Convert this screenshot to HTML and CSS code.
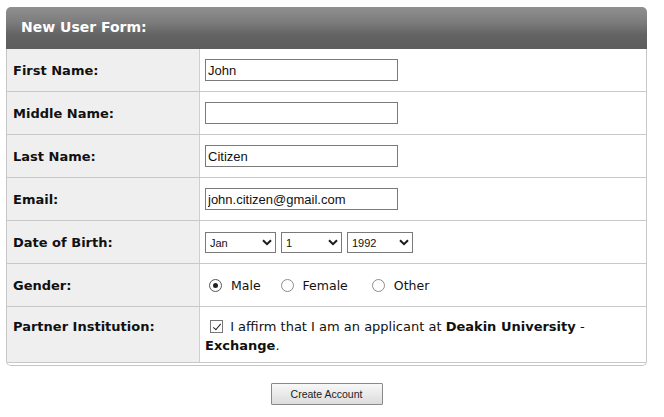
FILE: index.html
```html
<!DOCTYPE html>
<html lang="en">
<head>
<meta charset="utf-8">
<title>New User Form</title>
<link rel="stylesheet" href="styles.css">
</head>
<body>
<form class="panel">
  <div class="panel-head">New User Form:</div>
  <div class="panel-body">
    <div class="row">
      <label class="cell-label" for="fn">First Name:</label>
      <div class="cell-value"><input class="text" id="fn" type="text" value="John"></div>
    </div>
    <div class="row">
      <label class="cell-label" for="mn">Middle Name:</label>
      <div class="cell-value"><input class="text" id="mn" type="text" value=""></div>
    </div>
    <div class="row">
      <label class="cell-label" for="ln">Last Name:</label>
      <div class="cell-value"><input class="text" id="ln" type="text" value="Citizen"></div>
    </div>
    <div class="row">
      <label class="cell-label" for="em">Email:</label>
      <div class="cell-value"><input class="text" id="em" type="text" value="john.citizen@gmail.com"></div>
    </div>
    <div class="row">
      <div class="cell-label">Date of Birth:</div>
      <div class="cell-value selects">
        <span class="select sel-month"><select><option>Jan</option></select><svg class="chev" width="10" height="7" viewBox="0 0 10 7"><path d="M1 1.2 L5 5.2 L9 1.2" fill="none" stroke="#1a1a1a" stroke-width="2"/></svg></span>
        <span class="select sel-day"><select><option>1</option></select><svg class="chev" width="10" height="7" viewBox="0 0 10 7"><path d="M1 1.2 L5 5.2 L9 1.2" fill="none" stroke="#1a1a1a" stroke-width="2"/></svg></span>
        <span class="select sel-year"><select><option>1992</option></select><svg class="chev" width="10" height="7" viewBox="0 0 10 7"><path d="M1 1.2 L5 5.2 L9 1.2" fill="none" stroke="#1a1a1a" stroke-width="2"/></svg></span>
      </div>
    </div>
    <div class="row">
      <div class="cell-label">Gender:</div>
      <div class="cell-value radios">
        <label class="opt"><input type="radio" name="g" checked><span>Male</span></label>
        <label class="opt opt-wide"><input type="radio" name="g"><span>Female</span></label>
        <label class="opt"><input type="radio" name="g"><span>Other</span></label>
      </div>
    </div>
    <div class="row row-tall">
      <div class="cell-label">Partner Institution:</div>
      <div class="cell-value affirm"><label><input type="checkbox" checked> I affirm that I am an applicant at <b>Deakin University</b> - <b>Exchange</b>.</label></div>
    </div>
  </div>
  <div class="actions"><button type="button" class="btn">Create Account</button></div>
</form>
</body>
</html>
```
FILE: styles.css
```css
html, body {
  margin: 0;
  padding: 0;
  background: #fff;
}
body {
  font-family: "DejaVu Sans", Verdana, sans-serif;
  color: #111;
}
.panel {
  width: 641px;
  margin: 7px 0 0 6px;
}
.panel-head {
  height: 42px;
  line-height: 40px;
  padding-left: 15px;
  border-radius: 5px 5px 0 0;
  background: linear-gradient(to bottom, #909090 0%, #7d7d7d 35%, #646464 65%, #5c5c5c 100%);
  color: #fff;
  font-weight: bold;
  font-size: 14px;
}
.panel-body {
  border: 1px solid #c6c6c6;
  border-top: none;
  border-radius: 0 0 5px 5px;
  padding-bottom: 2px;
}
.row {
  display: grid;
  grid-template-columns: 193px 1fr;
  height: 42px;
  border-bottom: 1px solid #c8c8c8;
}
.cell-label {
  display: flex;
  align-items: center;
  padding-left: 6px;
  background: #efefef;
  border-right: 1px solid #cfcfcf;
  font-weight: bold;
  font-size: 13px;
  color: #111;
}
.cell-value {
  display: flex;
  align-items: center;
  padding-left: 5px;
}
.text {
  box-sizing: border-box;
  width: 193px;
  height: 22px;
  margin: 0;
  padding: 0 2px;
  border: 1px solid #7a7a7a;
  border-radius: 0;
  font-family: "Liberation Sans", Arial, sans-serif;
  font-size: 13px;
  color: #111;
  outline: none;
}
.selects {
  gap: 5px;
}
.select {
  position: relative;
  display: inline-block;
  height: 21px;
}
.select select {
  appearance: none;
  -webkit-appearance: none;
  box-sizing: border-box;
  height: 21px;
  margin: 0;
  padding: 0 0 0 4px;
  border: 1px solid #7a7a7a;
  border-radius: 0;
  background: #fff;
  font-family: "Liberation Sans", Arial, sans-serif;
  font-size: 11px;
  color: #111;
}
.sel-month select { width: 71px; }
.sel-day select { width: 61px; }
.sel-year select { width: 66px; }
.chev {
  position: absolute;
  right: 4px;
  top: 7px;
  pointer-events: none;
}
.radios {
  padding-left: 9px;
}
.opt {
  display: inline-flex;
  align-items: center;
  margin-right: 20px;
  font-size: 12.5px;
  color: #111;
}
.opt-wide {
  margin-right: 24px;
}
.opt input {
  appearance: none;
  -webkit-appearance: none;
  box-sizing: border-box;
  width: 13px;
  height: 13px;
  margin: 0 9px 0 0;
  border: 1px solid #8c8c8c;
  border-radius: 50%;
  background: #fff;
  display: grid;
  place-items: center;
}
.opt input:checked {
  border-color: #555;
}
.opt input:checked::after {
  content: "";
  width: 5px;
  height: 5px;
  border-radius: 50%;
  background: #222;
}
.row-tall {
  height: 55px;
}
.row-tall .cell-label {
  align-items: flex-start;
  padding-top: 10px;
  line-height: 19px;
  box-sizing: border-box;
}
.affirm {
  align-items: flex-start;
  padding-top: 10px;
  line-height: 19px;
  font-size: 13px;
  color: #111;
}
.affirm input {
  appearance: none;
  -webkit-appearance: none;
  box-sizing: border-box;
  width: 13px;
  height: 13px;
  margin: 0 3px 0 5px;
  vertical-align: -2px;
  border: 1px solid #777;
  background: #fff;
  position: relative;
}
.affirm input:checked::after {
  content: "";
  position: absolute;
  left: 3.5px;
  top: 0.5px;
  width: 3px;
  height: 7px;
  border: solid #222;
  border-width: 0 1.6px 1.6px 0;
  transform: rotate(40deg);
}
.affirm b {
  font-weight: bold;
}
.actions {
  text-align: center;
  padding-top: 17px;
}
.btn {
  box-sizing: border-box;
  width: 112px;
  height: 22px;
  margin: 0;
  padding: 0;
  border: 1px solid #8a8a8a;
  border-radius: 1px;
  background: linear-gradient(to bottom, #f8f8f8, #dcdcdc);
  font-family: "Liberation Sans", Arial, sans-serif;
  font-size: 10.5px;
  color: #222;
}
```
